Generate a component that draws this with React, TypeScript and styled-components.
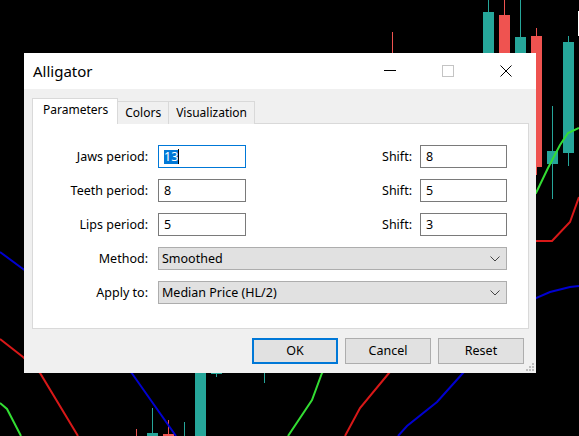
import React from "react";
import styled, { createGlobalStyle } from "styled-components";

const Global = createGlobalStyle`
  html, body { margin: 0; padding: 0; background: #000; }
  body {
    width: 579px; height: 436px; overflow: hidden;
    font-family: "Noto Sans", "Open Sans", sans-serif;
    color: #000;
  }
`;

const UI_FONT = `"Noto Sans", "Open Sans", sans-serif`;

const Desktop = styled.div`
  position: relative;
  width: 579px;
  height: 436px;
  background: #000;
  overflow: hidden;
`;

const ChartSvg = styled.svg`
  position: absolute;
  left: 0;
  top: 0;
`;

const Window = styled.div`
  position: absolute;
  left: 24px;
  top: 53px;
  width: 512px;
  height: 320px;
  background: #f0f0f0;
  display: flex;
  flex-direction: column;
  font-family: ${UI_FONT};
  font-size: 12.5px;
`;

const TitleBar = styled.div`
  height: 36px;
  flex: 0 0 36px;
  background: #fff;
  display: flex;
  align-items: center;
`;

const Title = styled.div`
  flex: 1;
  padding-left: 9px;
  font-size: 15px;
  line-height: 20px;
  margin-top: -1px;
`;

const CaptionButtons = styled.div`
  display: flex;
  margin-right: 1px;
`;

const CaptionButton = styled.div`
  width: 58px;
  height: 36px;
  display: flex;
  align-items: center;
  justify-content: center;
`;

const Body = styled.div`
  flex: 1;
  display: flex;
  flex-direction: column;
  padding: 9px 7px 0 8px;
`;

const TabRow = styled.div`
  display: flex;
  align-items: flex-end;
  height: 26px;
  margin-bottom: -1px;
  position: relative;
  z-index: 1;
`;

const Tab = styled.div<{ $active?: boolean }>`
  box-sizing: border-box;
  border: 1px solid #d9d9d9;
  border-bottom: none;
  margin-left: ${(p) => (p.$active ? "0" : "-1px")};
  height: ${(p) => (p.$active ? "26px" : "23px")};
  padding: ${(p) => (p.$active ? "0 9px 4px 10px" : "0 7px 1px 7px")};
  background: ${(p) => (p.$active ? "#fff" : "#f0f0f0")};
  display: flex;
  align-items: center;
  white-space: nowrap;
  font-size: 12px;
  &:first-child { margin-left: 0; }
`;

const Panel = styled.div`
  box-sizing: border-box;
  height: 206px;
  background: #fff;
  border: 1px solid #d9d9d9;
`;

const FormGrid = styled.div`
  display: grid;
  grid-template-columns: 125px 88px 1fr auto 87px;
  grid-auto-rows: 23px;
  row-gap: 11px;
  padding: 21px 21px 0 0;
`;

const Label = styled.div`
  align-self: center;
  text-align: right;
  padding-right: 10px;
  white-space: nowrap;
  line-height: 16px;
`;

const ShiftLabel = styled(Label)`
  grid-column: 4;
  padding-right: 8px;
`;

const Field = styled.div<{ $focused?: boolean }>`
  box-sizing: border-box;
  height: 23px;
  border: 1px solid ${(p) => (p.$focused ? "#0078d7" : "#7a7a7a")};
  background: #fff;
  padding-left: 5px;
  display: flex;
  align-items: center;
  line-height: 16px;
`;

const Selected = styled.span`
  background: #0078d7;
  color: #fff;
  line-height: 14px;
  height: 14px;
  display: inline-block;
`;

const Caret = styled.span`
  display: inline-block;
  width: 1px;
  height: 15px;
  background: #000;
`;

const Select = styled.div`
  grid-column: 2 / 6;
  box-sizing: border-box;
  height: 23px;
  background: #e1e1e1;
  border: 1px solid #adadad;
  padding: 0 6px 0 3px;
  display: flex;
  align-items: center;
  justify-content: space-between;
  line-height: 16px;
`;

const Footer = styled.div`
  display: flex;
  justify-content: flex-end;
  gap: 7px;
  padding: 9px 5px 0 0;
  position: relative;
`;

const Button = styled.div<{ $default?: boolean }>`
  box-sizing: border-box;
  width: 86px;
  height: 26px;
  background: #e1e1e1;
  border: ${(p) => (p.$default ? "2px solid #0078d7" : "1px solid #adadad")};
  display: flex;
  align-items: center;
  justify-content: center;
  line-height: 16px;
`;

const Grip = styled.svg`
  position: absolute;
  right: 0;
  bottom: 0;
`;

const Chevron = () => (
  <svg width="10" height="6" viewBox="0 0 10 6">
    <polyline points="0.5,0.5 5,5 9.5,0.5" fill="none" stroke="#444" strokeWidth="1" />
  </svg>
);

const Teal = "#26a69a";
const Red = "#ef5350";

type Candle = { x: number; top: number; bottom: number; wt: number; wb: number; c: string };

const candles: Candle[] = [
  { x: 483, top: 12, bottom: 90, wt: 0, wb: 95, c: Teal },
  { x: 499, top: 15, bottom: 100, wt: 0, wb: 110, c: Red },
  { x: 515, top: 37, bottom: 110, wt: 0, wb: 120, c: Teal },
  { x: 531, top: 36, bottom: 167, wt: 28, wb: 175, c: Red },
  { x: 547, top: 151, bottom: 164, wt: 106, wb: 199, c: Teal },
  { x: 563, top: 42, bottom: 153, wt: 36, wb: 166, c: Teal },
  { x: 387, top: 60, bottom: 120, wt: 32, wb: 130, c: Red },
  { x: 147, top: 433, bottom: 440, wt: 408, wb: 440, c: Teal },
  { x: 163, top: 434, bottom: 440, wt: 420, wb: 440, c: Red },
  { x: 195, top: 330, bottom: 440, wt: 320, wb: 440, c: Teal },
  { x: 211, top: 340, bottom: 374, wt: 330, wb: 377, c: Teal },
];

const wicks: { x: number; y1: number; y2: number; c: string }[] = [
  { x: 136.5, y1: 429, y2: 436, c: Red },
  { x: 184.5, y1: 422, y2: 436, c: Teal },
  { x: 264.5, y1: 340, y2: 383, c: Teal },
];

const Chart = () => (
  <ChartSvg width="579" height="436" viewBox="0 0 579 436">
    {candles.map((k, i) => (
      <g key={i}>
        <line x1={k.x + 5.5} y1={k.wt} x2={k.x + 5.5} y2={k.wb} stroke={k.c} strokeWidth="1" />
        <rect x={k.x} y={k.top} width="11" height={k.bottom - k.top} fill={k.c} />
      </g>
    ))}
    {wicks.map((w, i) => (
      <line key={i} x1={w.x} y1={w.y1} x2={w.x} y2={w.y2} stroke={w.c} strokeWidth="1" />
    ))}
    <rect x="578.5" y="11.5" width="10" height="24" fill="none" stroke="#fff" strokeWidth="1" />
    {/* Jaws (blue) */}
    <polyline points="0,252 23,269 80,310 131.7,373 176,436" fill="none" stroke="#0000d0" strokeWidth="2" />
    <polyline points="398,436 407,426 437,402 463,373 500,330 536,298 550,292 570,287 579,286" fill="none" stroke="#0000d0" strokeWidth="2" />
    {/* Teeth (red) */}
    <polyline points="0,339 23,357 40,373 78,436" fill="none" stroke="#d81818" strokeWidth="2" />
    <polyline points="345,436 360,408 389,373 460,300 536,241 552,241 570,222 579,197" fill="none" stroke="#d81818" strokeWidth="2" />
    {/* Lips (green) */}
    <polyline points="0,403 7,409 21,436" fill="none" stroke="#33dd33" strokeWidth="2" />
    <polyline points="288,436 312,400 322,373 430,260 536,193 548,168 560,145 568,133 579,128" fill="none" stroke="#33dd33" strokeWidth="2" />
  </ChartSvg>
);

const rows = [
  { label: "Jaws period:", value: "13", shift: "8", focused: true },
  { label: "Teeth period:", value: "8", shift: "5" },
  { label: "Lips period:", value: "5", shift: "3" },
];

export default function App() {
  return (
    <>
      <Global />
      <Desktop>
        <Chart />
        <Window>
          <TitleBar>
            <Title>Alligator</Title>
            <CaptionButtons>
              <CaptionButton>
                <svg width="12" height="12" viewBox="0 0 12 12">
                  <line x1="0" y1="5.5" x2="12" y2="5.5" stroke="#000" strokeWidth="1" />
                </svg>
              </CaptionButton>
              <CaptionButton>
                <svg width="12" height="12" viewBox="0 0 12 12">
                  <rect x="0.5" y="0.5" width="11" height="11" fill="none" stroke="#c4c4c4" strokeWidth="1" />
                </svg>
              </CaptionButton>
              <CaptionButton>
                <svg width="12" height="12" viewBox="0 0 12 12">
                  <line x1="0.5" y1="0.5" x2="11.5" y2="11.5" stroke="#000" strokeWidth="1" />
                  <line x1="11.5" y1="0.5" x2="0.5" y2="11.5" stroke="#000" strokeWidth="1" />
                </svg>
              </CaptionButton>
            </CaptionButtons>
          </TitleBar>
          <Body>
            <TabRow>
              <Tab $active>Parameters</Tab>
              <Tab>Colors</Tab>
              <Tab>Visualization</Tab>
            </TabRow>
            <Panel>
              <FormGrid>
                {rows.map((r) => (
                  <React.Fragment key={r.label}>
                    <Label>{r.label}</Label>
                    <Field $focused={r.focused}>
                      {r.focused ? (
                        <>
                          <Selected>{r.value}</Selected>
                          <Caret />
                        </>
                      ) : (
                        r.value
                      )}
                    </Field>
                    <ShiftLabel>Shift:</ShiftLabel>
                    <Field>{r.shift}</Field>
                  </React.Fragment>
                ))}
                <Label>Method:</Label>
                <Select>
                  <span>Smoothed</span>
                  <Chevron />
                </Select>
                <Label>Apply to:</Label>
                <Select>
                  <span>Median Price (HL/2)</span>
                  <Chevron />
                </Select>
              </FormGrid>
            </Panel>
            <Footer>
              <Button $default>OK</Button>
              <Button>Cancel</Button>
              <Button>Reset</Button>
            </Footer>
          </Body>
          <Grip width="12" height="12" viewBox="0 0 12 12">
            {[
              [8, 2],
              [5, 5],
              [8, 5],
              [2, 8],
              [5, 8],
              [8, 8],
            ].map(([x, y], i) => (
              <rect key={i} x={x} y={y} width="2" height="2" fill="#bdbdbd" />
            ))}
          </Grip>
        </Window>
      </Desktop>
    </>
  );
}
